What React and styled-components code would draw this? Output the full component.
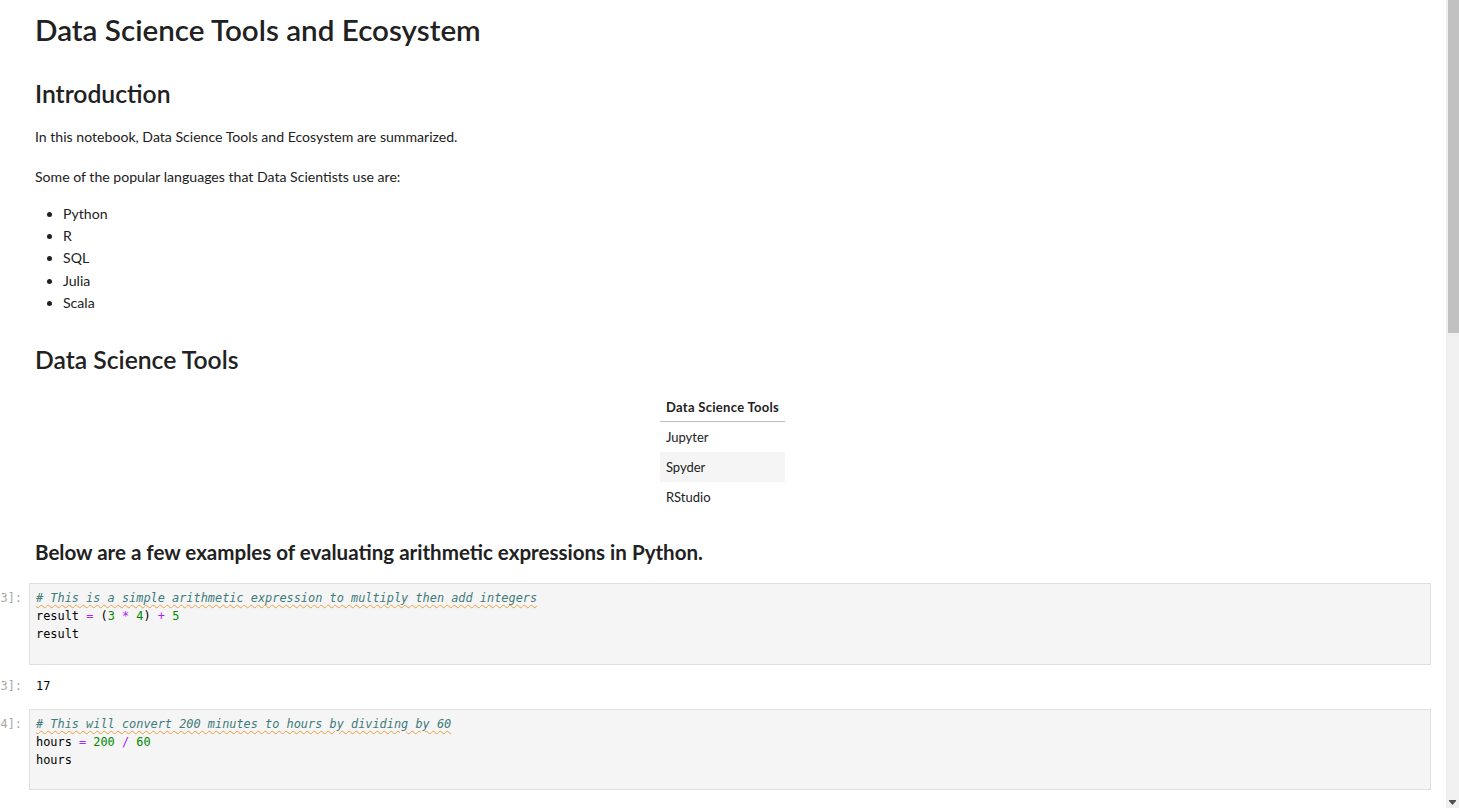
import React from "react";
import styled, { createGlobalStyle } from "styled-components";

const Global = createGlobalStyle`
  html, body { margin: 0; padding: 0; background: #ffffff; overflow: hidden; }
  body { font-family: Lato, "Liberation Sans", sans-serif; color: #212121; }
`;

const Page = styled.div`
  display: flex;
  width: 1459px;
  height: 808px;
  overflow: hidden;
`;

const Main = styled.main`
  flex: 1;
  min-width: 0;
  height: 808px;
  overflow: hidden;
  padding-right: 15px;
  background: #ffffff;
`;

const Cell = styled.section`
  display: flex;
  align-items: flex-start;
  margin-top: ${(p) => p.$mt || 0}px;
`;

const Prompt = styled.div`
  flex: 0 0 29px;
  min-width: 0;
  width: 29px;
  display: flex;
  justify-content: flex-end;
  padding-right: 7px;
  box-sizing: border-box;
  white-space: nowrap;
  font-family: "DejaVu Sans Mono", "Liberation Mono", monospace;
  font-size: 11.9px;
  line-height: 17.9px;
  color: #a8a8a8;
  padding-top: ${(p) => p.$top || 0}px;
`;

const Markdown = styled.div`
  flex: 1;
  min-width: 0;
  padding: 0 21px 0 6px;
  font-size: 14.1px;
  line-height: 22.4px;
`;

const H1 = styled.h1`
  margin: 12px 0 0;
  font-size: 29.6px;
  line-height: 35px;
  font-weight: 600;
`;

const H2 = styled.h2`
  margin: ${(p) => p.$mt}px 0 0;
  font-size: 24.7px;
  line-height: 29px;
  font-weight: 600;
`;

const H3 = styled.h3`
  margin: ${(p) => p.$mt}px 0 0;
  font-size: 20.55px;
  line-height: 24px;
  font-weight: 700;
`;

const P = styled.p`
  margin: ${(p) => p.$mt}px 0 0;
`;

const List = styled.ul`
  margin: 14px 0 0;
  padding-left: 28px;
  li { line-height: 22.25px; }
`;

const TableWrap = styled.div`
  display: flex;
  justify-content: center;
  margin-top: 18px;
`;

const Table = styled.table`
  border-collapse: collapse;
  font-size: 13px;
  line-height: 18px;
  width: 125px;
`;

const Th = styled.th`
  text-align: left;
  font-weight: 700;
  letter-spacing: 0.3px;
  padding: 6px 6px 5px;
  border-bottom: 1px solid #bdbdbd;
  white-space: nowrap;
`;

const Td = styled.td`
  padding: 6px;
  background: ${(p) => (p.$alt ? "#f5f5f5" : "transparent")};
`;

const CodeBox = styled.div`
  flex: 1;
  min-width: 0;
  border: 1px solid #e0e0e0;
  background: #f5f5f5;
  padding: 6px 6px 20px;
  font-family: "DejaVu Sans Mono", "Liberation Mono", monospace;
  font-size: 11.9px;
  line-height: 17.9px;
  color: #000;
  white-space: pre;
`;

const Output = styled.div`
  flex: 1;
  padding-left: 7px;
  font-family: "DejaVu Sans Mono", "Liberation Mono", monospace;
  font-size: 11.9px;
  line-height: 17.9px;
  color: #000;
  white-space: pre;
`;

const Comment = styled.span`
  color: #3d7b7b;
  font-style: italic;
  text-decoration: underline wavy #f0a040;
  text-decoration-thickness: 1px;
  text-underline-offset: 2px;
`;

const Op = styled.span`
  color: #aa22ff;
`;

const Num = styled.span`
  color: #008800;
`;

const Line = styled.div``;

const Scrollbar = styled.div`
  flex: 0 0 13px;
  height: 808px;
  background: #f0f0f0;
  display: flex;
  flex-direction: column;
  justify-content: space-between;
  align-items: flex-end;
`;

const Thumb = styled.div`
  width: 11px;
  height: 333px;
  background: #c1c1c1;
`;

const Arrow = styled.svg`
  width: 13px;
  height: 8px;
  margin-bottom: 2px;
  display: block;
`;

export default function App() {
  return (
    <>
      <Global />
      <Page>
        <Main>
          <Cell>
            <Prompt />
            <Markdown>
              <H1>Data Science Tools and Ecosystem</H1>
              <H2 $mt={32}>Introduction</H2>
              <P $mt={18}>In this notebook, Data Science Tools and Ecosystem are summarized.</P>
              <P $mt={18}>Some of the popular languages that Data Scientists use are:</P>
              <List>
                {["Python", "R", "SQL", "Julia", "Scala"].map((l) => (
                  <li key={l}>{l}</li>
                ))}
              </List>
              <H2 $mt={31}>Data Science Tools</H2>
              <TableWrap>
                <Table>
                  <thead>
                    <tr>
                      <Th>Data Science Tools</Th>
                    </tr>
                  </thead>
                  <tbody>
                    <tr><Td>Jupyter</Td></tr>
                    <tr><Td $alt>Spyder</Td></tr>
                    <tr><Td>RStudio</Td></tr>
                  </tbody>
                </Table>
              </TableWrap>
              <H3 $mt={28}>Below are a few examples of evaluating arithmetic expressions in Python.</H3>
            </Markdown>
          </Cell>

          <Cell $mt={19}>
            <Prompt $top={7}>[3]:</Prompt>
            <CodeBox>
              <Line><Comment># This is a simple arithmetic expression to multiply then add integers</Comment></Line>
              <Line>result <Op>=</Op> (<Num>3</Num> <Op>*</Op> <Num>4</Num>) <Op>+</Op> <Num>5</Num></Line>
              <Line>result</Line>
            </CodeBox>
          </Cell>

          <Cell $mt={13}>
            <Prompt>[3]:</Prompt>
            <Output>17</Output>
          </Cell>

          <Cell $mt={13}>
            <Prompt $top={7}>[4]:</Prompt>
            <CodeBox>
              <Line><Comment># This will convert 200 minutes to hours by dividing by 60</Comment></Line>
              <Line>hours <Op>=</Op> <Num>200</Num> <Op>/</Op> <Num>60</Num></Line>
              <Line>hours</Line>
            </CodeBox>
          </Cell>
        </Main>
        <Scrollbar>
          <Thumb />
          <Arrow viewBox="0 0 13 8">
            <path d="M3 3h7l-3.5 4z" fill="#505050" />
            <rect x="3" y="2" width="7" height="1" fill="#505050" />
          </Arrow>
        </Scrollbar>
      </Page>
    </>
  );
}
